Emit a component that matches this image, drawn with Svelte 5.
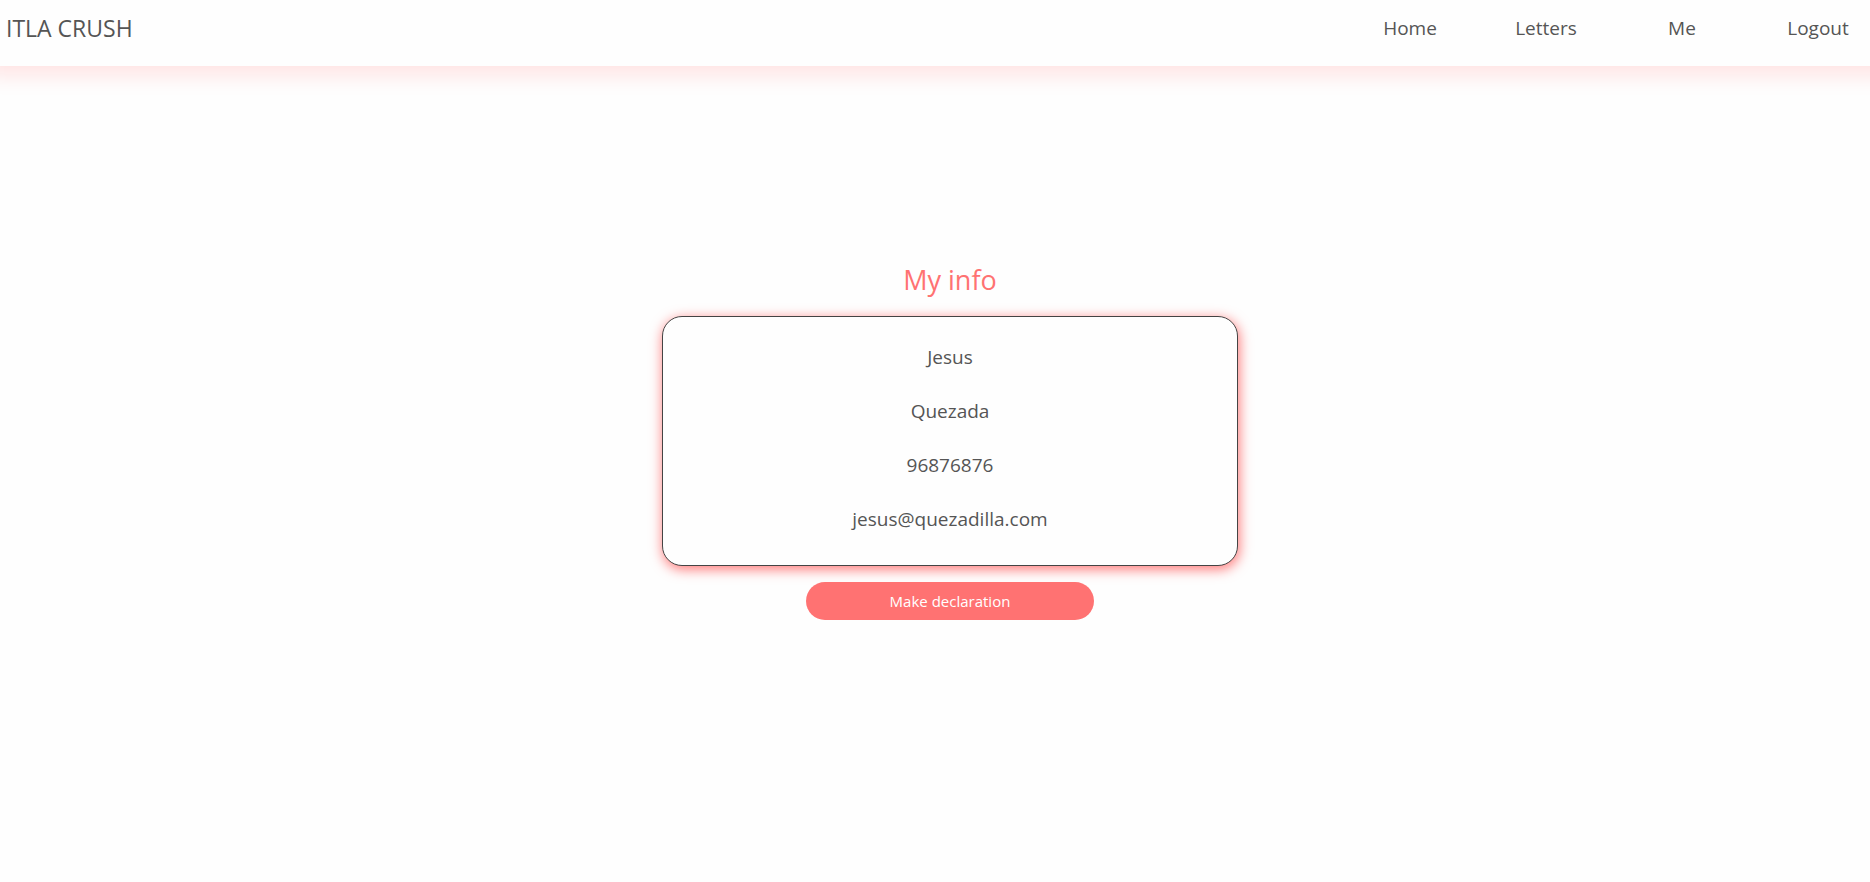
<script>
  const links = ['Home', 'Letters', 'Me', 'Logout'];
  const info = ['Jesus', 'Quezada', '96876876', 'jesus@quezadilla.com'];
</script>

<div class="page">
  <header>
    <a class="brand" href="#home">ITLA CRUSH</a>
    <nav aria-label="Main">
      {#each links as link}
        <a href={'#' + link.toLowerCase()}>{link}</a>
      {/each}
    </nav>
  </header>

  <main>
    <h1>My info</h1>
    <section class="card">
      {#each info as line}
        <p>{line}</p>
      {/each}
    </section>
    <button type="button">Make declaration</button>
  </main>
</div>

<style>
  :global(body) {
    margin: 0;
    background: #fefefe;
  }

  .page {
    display: flex;
    flex-direction: column;
    min-height: 100vh;
    overflow-x: hidden;
    color: #555;
    font-family: 'Segoe UI', 'Open Sans', 'Noto Sans', sans-serif;
    font-size: 19px;
    font-weight: 400;
  }

  header {
    display: flex;
    justify-content: space-between;
    height: 66px;
    background: #fefefe;
    box-shadow: 5px -12px 22px 20px #ffe0e0;
  }

  a {
    color: inherit;
    text-decoration: none;
    line-height: 56px;
  }

  .brand {
    padding-left: 6px;
    font-size: 23px;
  }

  nav {
    display: grid;
    grid-template-columns: repeat(4, 104px);
    gap: 32px;
    text-align: center;
  }

  main {
    flex: 1;
    display: flex;
    flex-direction: column;
    align-items: center;
    justify-content: center;
    padding: 0 0 66px 30px;
  }

  h1 {
    margin: 0 0 18px;
    color: #ff7272;
    font-size: 27px;
    font-weight: 400;
    line-height: 36px;
  }

  .card {
    box-sizing: border-box;
    width: 100%;
    max-width: 576px;
    padding: 13px 16px 19px;
    border: 1px solid #444;
    border-radius: 20px;
    background: #fefefe;
    box-shadow: 1px 3px 13px #ff7272;
    text-align: center;
  }

  p {
    margin: 0;
    line-height: 54px;
  }

  button {
    width: 100%;
    max-width: 288px;
    height: 38px;
    margin-top: 16px;
    padding: 0;
    border: 0;
    border-radius: 20px;
    background: #ff7272;
    color: #fff;
    font-family: inherit;
    font-size: 15px;
    cursor: pointer;
  }
</style>
